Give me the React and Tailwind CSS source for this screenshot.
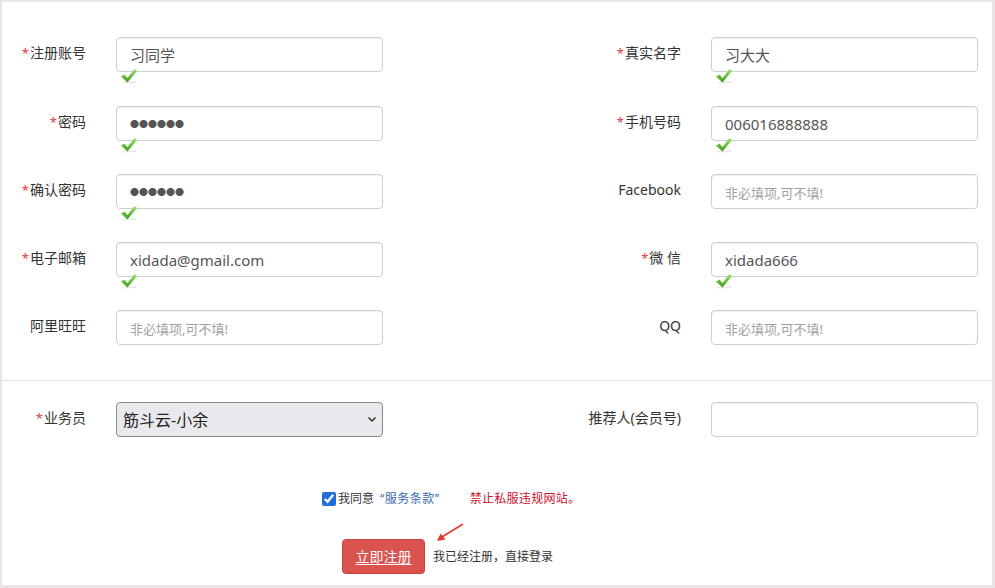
import { useState } from 'react';

const font = "font-['Noto_Sans','Noto_Sans_CJK_SC',sans-serif]";

function Check() {
  return (
    <svg className="absolute left-[4px] top-[31px]" width="18" height="16" viewBox="0 0 18 16">
      <defs>
        <linearGradient id="ck" x1="0" y1="0" x2="0" y2="1">
          <stop offset="0" stopColor="#9be36a" />
          <stop offset="1" stopColor="#3f9a1c" />
        </linearGradient>
      </defs>
      <path d="M1.5 14.5 L16 13 L17 15 L3 15.5 Z" fill="#d9d9d9" opacity="0.6" />
      <path d="M1 8.5 L4.5 6.5 L7.5 10 L14.5 1 L17 3 L7.5 14.5 Z" fill="url(#ck)" />
    </svg>
  );
}

function Label({ text, req, w }) {
  return (
    <div className={`${w} shrink-0 text-right text-[14px] leading-[20px] pt-[6px] text-[#333]`}>
      {req && <span className="text-[#e4393c] text-[13px] mr-[1px]">*</span>}
      {text}
    </div>
  );
}

function Field({ value, placeholder, secret, ok }) {
  const [v, setV] = useState(value || '');
  return (
    <div className="relative ml-[30px] w-[267px] shrink-0">
      <input
        type="text"
        value={secret ? '●'.repeat(v.length) : v}
        placeholder={placeholder}
        onChange={(e) => setV(e.target.value)}
        className={`w-full h-[35px] border border-[#cfcfcf] rounded-[4px] pl-[13px] pr-2 outline-none placeholder:text-[#a0a0a0] placeholder:text-[13px] ${secret ? "font-['Noto_Sans_CJK_SC',sans-serif] text-[9px] text-[#555]" : 'text-[15px] text-[#555]'} shadow-[inset_0_1px_1px_rgba(0,0,0,0.06)]`}
      />
      {ok && <Check />}
    </div>
  );
}

const rows = [
  [
    { label: '注册账号', req: true, value: '习同学', ok: true },
    { label: '真实名字', req: true, value: '习大大', ok: true },
    'mt-[35px]',
  ],
  [
    { label: '密码', req: true, value: '123456', secret: true, ok: true },
    { label: '手机号码', req: true, value: '006016888888', ok: true },
    'mt-[34px]',
  ],
  [
    { label: '确认密码', req: true, value: '123456', secret: true, ok: true },
    { label: 'Facebook', placeholder: '非必填项,可不填!' },
    'mt-[33px]',
  ],
  [
    { label: '电子邮箱', req: true, value: 'xidada@gmail.com', ok: true },
    { label: '微 信', req: true, value: 'xidada666', ok: true },
    'mt-[33px]',
  ],
  [
    { label: '阿里旺旺', placeholder: '非必填项,可不填!' },
    { label: 'QQ', placeholder: '非必填项,可不填!' },
    'mt-[33px]',
  ],
];

export default function App() {
  return (
    <div className={`${font} w-[995px] h-[588px] bg-white border-[#e9e5e5] border-t-2 border-l-2 border-r-[3px] border-b-[3px] overflow-hidden`}>
      {rows.map(([l, r, mt], i) => (
        <div key={i} className={`flex h-[35px] ${mt}`}>
          <div className="flex w-[495px] shrink-0">
            <Label text={l.label} req={l.req} w="w-[84px]" />
            <Field value={l.value} placeholder={l.placeholder} secret={l.secret} ok={l.ok} />
          </div>
          <div className="flex">
            <Label text={r.label} req={r.req} w="w-[184px]" />
            <Field value={r.value} placeholder={r.placeholder} secret={r.secret} ok={r.ok} />
          </div>
        </div>
      ))}

      <div className="mt-[35px] h-px bg-[#e6e6e6]" />

      <div className="flex h-[35px] mt-[21px]">
        <div className="flex w-[495px] shrink-0">
          <Label text="业务员" req w="w-[84px]" />
          <div className="relative ml-[30px] w-[267px] shrink-0">
            <select className="appearance-none w-full h-[35px] bg-[#e9e9ed] border border-[#8a8a8a] rounded-[4px] pl-[6px] text-[16px] text-[#222] outline-none">
              <option>筋斗云-小余</option>
            </select>
            <svg className="absolute right-[6px] top-[14px] pointer-events-none" width="10" height="7" viewBox="0 0 10 7">
              <path d="M1.5 1.5 L5 5 L8.5 1.5" fill="none" stroke="#333" strokeWidth="1.5" />
            </svg>
          </div>
        </div>
        <div className="flex">
          <Label text="推荐人(会员号)" w="w-[184px]" />
          <Field value="" />
        </div>
      </div>

      <div className="flex items-center mt-[53px] pl-[320px] text-[12px] h-[18px]">
        <input type="checkbox" defaultChecked className="w-[14px] h-[14px] m-0 accent-[#1e6fd9]" />
        <span className="ml-[2px] text-[#333]">我同意</span>
        <span className="ml-[6px] text-[#3a67b0] tracking-[0.5px]">“服务条款”</span>
        <span className="ml-[30px] text-[#c8102e] tracking-[0.3px]">禁止私服违规网站。</span>
      </div>

      <div className="relative flex items-center mt-[31px] pl-[340px]">
        <button className="w-[83px] h-[35px] bg-[#d9534f] rounded-[4px] text-white text-[14px] underline underline-offset-2 border border-[#d43f3a]">
          立即注册
        </button>
        <span className="ml-[8px] text-[12px] text-[#333]">我已经注册，直接登录</span>
        <svg className="absolute left-[432px] top-[-17px]" width="32" height="22" viewBox="0 0 32 22">
          <path d="M29 2 L8 15" stroke="#e33b2e" strokeWidth="1.6" fill="none" />
          <path d="M3 19 L6.5 11.5 L11.5 17.5 Z" fill="#e33b2e" />
        </svg>
      </div>
    </div>
  );
}
